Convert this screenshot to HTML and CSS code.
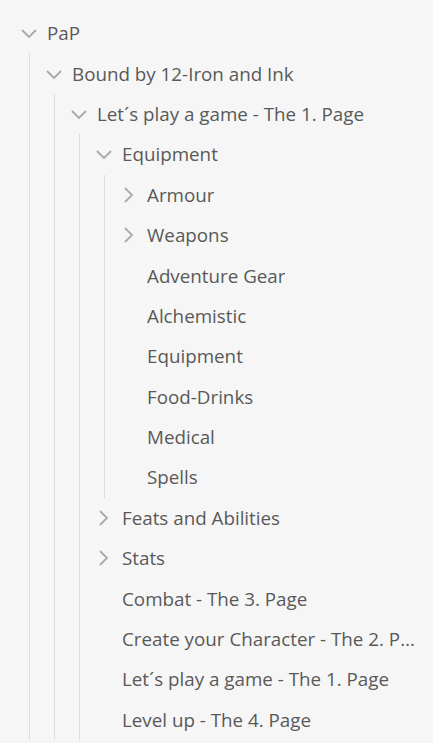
FILE: index.html
```html
<!DOCTYPE html>
<html lang="en">
<head>
    <meta charset="UTF-8">
    <meta name="viewport" content="width=device-width, initial-scale=1.0">
    <title>Files</title>
    <link rel="stylesheet" href="styles.css">
</head>
<body>
    <div class="tree">
        <div class="item">
            <div class="row"><span class="arrow"><svg viewBox="0 0 16 16"><polyline points="1,5 8,12 15,5"/></svg></span><span class="name">PaP</span></div>
            <div class="children">
                <div class="item">
                    <div class="row"><span class="arrow"><svg viewBox="0 0 16 16"><polyline points="1,5 8,12 15,5"/></svg></span><span class="name">Bound by 12-Iron and Ink</span></div>
                    <div class="children">
                        <div class="item">
                            <div class="row"><span class="arrow"><svg viewBox="0 0 16 16"><polyline points="1,5 8,12 15,5"/></svg></span><span class="name">Let´s play a game - The 1. Page</span></div>
                            <div class="children">
                                <div class="item">
                                    <div class="row"><span class="arrow"><svg viewBox="0 0 16 16"><polyline points="1,5 8,12 15,5"/></svg></span><span class="name">Equipment</span></div>
                                    <div class="children">
                                        <div class="row"><span class="arrow"><svg viewBox="0 0 16 16"><polyline points="4,1 11,8 4,15"/></svg></span><span class="name">Armour</span></div>
                                        <div class="row"><span class="arrow"><svg viewBox="0 0 16 16"><polyline points="4,1 11,8 4,15"/></svg></span><span class="name">Weapons</span></div>
                                        <div class="row"><span class="arrow"></span><span class="name">Adventure Gear</span></div>
                                        <div class="row"><span class="arrow"></span><span class="name">Alchemistic</span></div>
                                        <div class="row"><span class="arrow"></span><span class="name">Equipment</span></div>
                                        <div class="row"><span class="arrow"></span><span class="name">Food-Drinks</span></div>
                                        <div class="row"><span class="arrow"></span><span class="name">Medical</span></div>
                                        <div class="row"><span class="arrow"></span><span class="name">Spells</span></div>
                                    </div>
                                </div>
                                <div class="row"><span class="arrow"><svg viewBox="0 0 16 16"><polyline points="4,1 11,8 4,15"/></svg></span><span class="name">Feats and Abilities</span></div>
                                <div class="row"><span class="arrow"><svg viewBox="0 0 16 16"><polyline points="4,1 11,8 4,15"/></svg></span><span class="name">Stats</span></div>
                                <div class="row"><span class="arrow"></span><span class="name">Combat - The 3. Page</span></div>
                                <div class="row"><span class="arrow"></span><span class="name">Create your Character - The 2. Page</span></div>
                                <div class="row"><span class="arrow"></span><span class="name">Let´s play a game - The 1. Page</span></div>
                                <div class="row"><span class="arrow"></span><span class="name">Level up - The 4. Page</span></div>
                            </div>
                        </div>
                    </div>
                </div>
            </div>
        </div>
    </div>
</body>
</html>
```

FILE: styles.css
```css
body {
    margin: 0;
    background: #f6f6f6;
    font-family: "Open Sans", "Noto Sans", sans-serif;
    font-size: 18.8px;
    color: #595959;
    overflow: hidden;
}
.tree {
    padding: 13px 10px 0 5px;
}
.row {
    display: flex;
    align-items: center;
    height: 40.4px;
    min-width: 0;
}
.arrow {
    flex: none;
    display: flex;
    width: 16px;
    height: 16px;
    margin-left: 16px;
    margin-right: 10px;
}
.arrow svg {
    width: 16px;
    height: 16px;
    fill: none;
    stroke: #a9a9a9;
    stroke-width: 1.8;
}
.name {
    white-space: nowrap;
    overflow: hidden;
    text-overflow: ellipsis;
    min-width: 0;
}
.children {
    margin-left: 24px;
    border-left: 1px solid #dddddd;
}
```
